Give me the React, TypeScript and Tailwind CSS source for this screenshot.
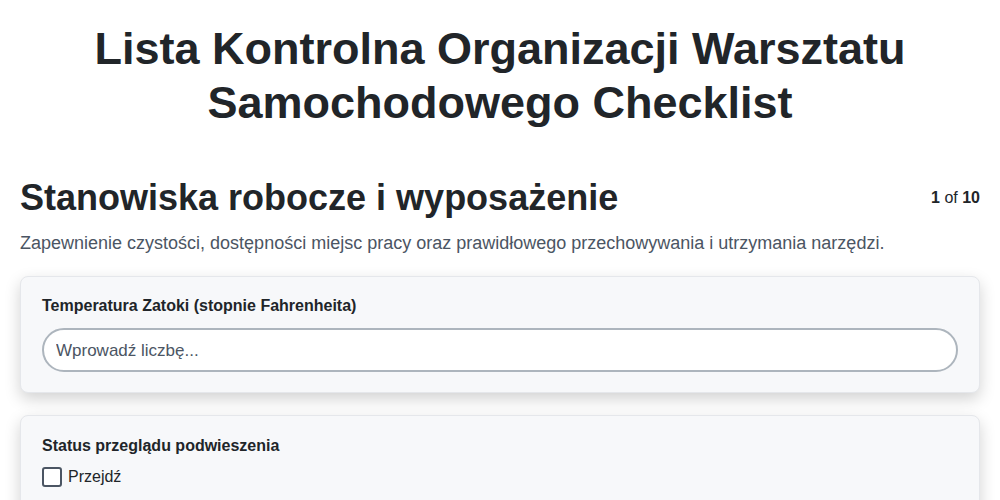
import React from "react";

export default function App() {
  return (
    <div
      className="min-h-screen bg-white text-[#212529]"
      style={{ fontFamily: '"Liberation Sans", Arial, sans-serif' }}
    >
      <div className="px-5 pt-[22px]">
        <h1 className="mx-auto max-w-[860px] text-center text-[45px] font-bold leading-[54px] text-[#212529]">
          Lista Kontrolna Organizacji Warsztatu Samochodowego Checklist
        </h1>

        <div className="mt-[46px] flex items-start justify-between">
          <h2 className="text-[36px] font-bold leading-[44px] text-[#212529]">
            Stanowiska robocze i wyposażenie
          </h2>
          <div className="mt-[10px] text-[16px] text-[#212529]">
            <span className="font-bold">1</span> of <span className="font-bold">10</span>
          </div>
        </div>

        <p className="mt-[11px] text-[18px] leading-[24px] text-[#4b5563]">
          Zapewnienie czystości, dostępności miejsc pracy oraz prawidłowego przechowywania i utrzymania narzędzi.
        </p>

        <div className="mt-[21px] flex flex-col gap-[22px]">
          <div className="rounded-lg border border-[#e5e7eb] bg-[#f7f8fa] px-[21px] pb-[20px] pt-[19px] shadow-[0_6px_16px_rgba(0,0,0,0.18)]">
            <label className="block text-[16px] font-bold leading-[20px] text-[#212529]">
              Temperatura Zatoki (stopnie Fahrenheita)
            </label>
            <input
              type="text"
              placeholder="Wprowadź liczbę..."
              className="mt-[12px] block h-[44px] w-full rounded-full border-2 border-[#adb5bd] bg-white px-[12px] pt-[1px] text-[17px] text-[#212529] placeholder:text-[#4b5563] outline-none"
            />
          </div>

          <div className="rounded-lg border border-[#e5e7eb] bg-[#f7f8fa] px-[21px] pb-[20px] pt-[20px] shadow-[0_6px_16px_rgba(0,0,0,0.18)]">
            <div className="text-[16px] font-bold leading-[20px] text-[#212529]">
              Status przeglądu podwieszenia
            </div>
            <div className="mt-[9px] flex flex-col gap-[10px]">
              {["Przejdź", "Nie przeszedł", "Wymaga uwagi"].map((o) => (
                <label key={o} className="flex items-center gap-[6px] text-[16px] text-[#212529]">
                  <span className="inline-block h-[20px] w-[20px] rounded-[3px] border-2 border-[#4b5563] bg-white" />
                  {o}
                </label>
              ))}
            </div>
          </div>
        </div>
      </div>
    </div>
  );
}
